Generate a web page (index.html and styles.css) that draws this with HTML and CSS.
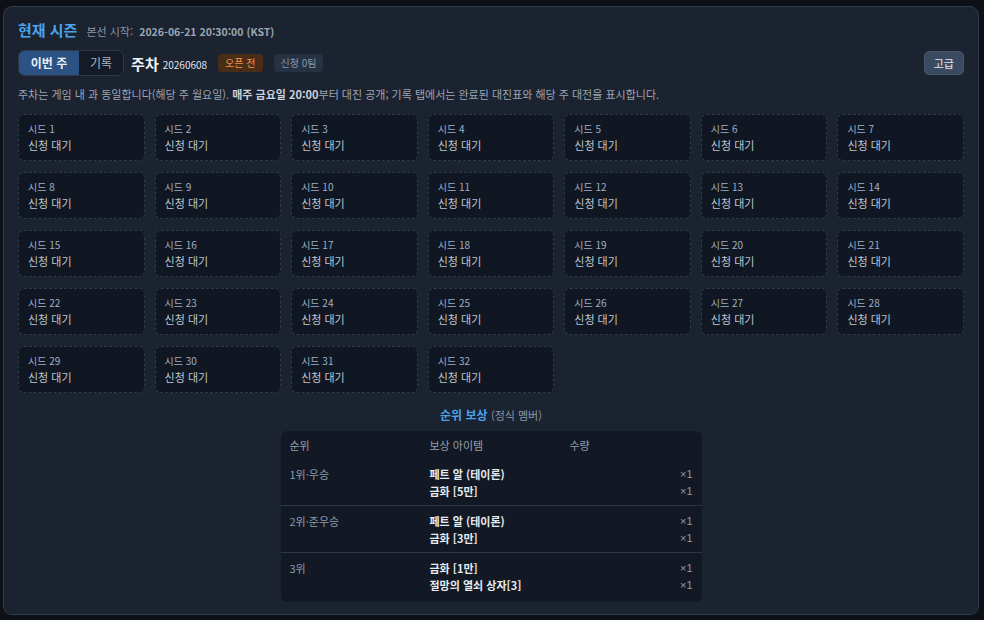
FILE: index.html
```html
<!DOCTYPE html>
<html lang="ko">
  <head>
    <meta charset="UTF-8" />
    <title>현재 시즌</title>
    <link rel="stylesheet" href="styles.css">
  </head>
  <body>
    <div class="season-panel">
      <div class="season-head">
        <h2>현재 시즌</h2>
        <span class="start-time">본선 시작:&nbsp; <b>2026-06-21 20:30:00 (KST)</b></span>
      </div>

      <div class="toolbar">
        <div class="tabs">
          <button class="tab active">이번 주</button>
          <button class="tab">기록</button>
        </div>
        <span class="week-label">주차</span>
        <span class="week-num">20260608</span>
        <span class="badge badge-open">오픈 전</span>
        <span class="badge badge-count">신청 0팀</span>
        <button class="adv-btn">고급</button>
      </div>

      <p class="note">주차는 게임 내 과 동일합니다(해당 주 월요일). <b>매주 금요일 20:00</b>부터 대진 공개; 기록 탭에서는 완료된 대진표와 해당 주 대전을 표시합니다.</p>

      <div class="seed-grid" id="seed-grid"></div>

      <div class="reward">
        <h3>순위 보상 <span>(정식 멤버)</span></h3>
        <div class="reward-table">
          <div class="rt-head">
            <div>순위</div>
            <div>보상 아이템</div>
            <div>수량</div>
          </div>
          <div class="rt-row">
            <div class="rank">1위·우승</div>
            <div class="items">
              <div>페트 알 (테이론)</div>
              <div>금화 [5만]</div>
            </div>
            <div class="qty">
              <div>×1</div>
              <div>×1</div>
            </div>
          </div>
          <div class="rt-row">
            <div class="rank">2위·준우승</div>
            <div class="items">
              <div>페트 알 (테이론)</div>
              <div>금화 [3만]</div>
            </div>
            <div class="qty">
              <div>×1</div>
              <div>×1</div>
            </div>
          </div>
          <div class="rt-row">
            <div class="rank">3위</div>
            <div class="items">
              <div>금화 [1만]</div>
              <div>절망의 열쇠 상자[3]</div>
            </div>
            <div class="qty">
              <div>×1</div>
              <div>×1</div>
            </div>
          </div>
        </div>
      </div>
    </div>

    <script>
      const grid = document.getElementById("seed-grid");
      for (let i = 1; i <= 32; i++) {
        const card = document.createElement("div");
        card.className = "seed-card";
        card.innerHTML = `<div class="seed-no">시드 ${i}</div><div class="seed-state">신청 대기</div>`;
        grid.appendChild(card);
      }
    </script>
  </body>
</html>
```

FILE: styles.css
```css
body {
  margin: 0;
  padding: 6px 5px 5px 3px;
  background: #0d1117;
  font-family: "Noto Sans CJK KR", "Noto Sans", sans-serif;
  color: #d7dde6;
}

.season-panel {
  background: #1b2230;
  border: 1px solid #2f3a4b;
  border-radius: 9px;
  padding: 12px 14px 12px 14px;
}

.season-head {
  display: flex;
  align-items: baseline;
  gap: 9px;
}

.season-head h2 {
  margin: 0;
  font-size: 15px;
  font-weight: 700;
  color: #4ba3ea;
  line-height: 22px;
}

.start-time {
  font-size: 11px;
  color: #8b96a6;
}

.start-time b {
  font-size: 10.5px;
  font-weight: 600;
  color: #9aa5b4;
}

.toolbar {
  display: flex;
  align-items: center;
  margin-top: 8px;
  height: 28px;
}

.tabs {
  display: flex;
  border: 1px solid #2c3748;
  border-radius: 6px;
  overflow: hidden;
  background: #141b26;
}

.tab {
  font-family: inherit;
  font-size: 12px;
  border: none;
  background: transparent;
  color: #aab4c2;
  padding: 4px 11px;
  line-height: 16px;
}

.tab.active {
  background: #2b5282;
  color: #e8eef6;
  font-weight: 600;
  padding: 4px 11px 4px 11px;
  width: 60px;
}

.week-label {
  font-size: 15px;
  font-weight: 600;
  color: #eef2f7;
  margin-left: 7px;
}

.week-num {
  font-size: 10px;
  color: #dfe4eb;
  margin-left: 4px;
  margin-top: 3px;
}

.badge {
  font-size: 10px;
  border-radius: 4px;
  padding: 1px 7px;
  line-height: 16px;
}

.badge-open {
  background: #4a2d17;
  color: #f0924e;
  margin-left: 11px;
}

.badge-count {
  background: #263142;
  color: #8796ab;
  margin-left: 11px;
}

.adv-btn {
  margin-left: auto;
  font-family: inherit;
  font-size: 11px;
  background: #3a4a60;
  color: #e6ebf2;
  border: 1px solid #46566d;
  border-radius: 5px;
  padding: 3px 9px;
  line-height: 16px;
}

.note {
  margin: 10px 0 13px;
  font-size: 11px;
  color: #9ba6b5;
  line-height: 14px;
}

.note b {
  color: #c9d1dc;
  font-weight: 700;
}

.seed-grid {
  display: grid;
  grid-template-columns: repeat(7, 1fr);
  gap: 11px 10px;
}

.seed-card {
  background: #111722;
  border: 1px dashed #2e3949;
  border-radius: 6px;
  height: 45px;
  padding: 0 9px;
  display: flex;
  flex-direction: column;
  justify-content: center;
}

.seed-no {
  font-size: 10px;
  color: #9fb0c6;
  line-height: 15px;
}

.seed-state {
  font-size: 11px;
  color: #bec6d1;
  line-height: 19px;
}

.reward {
  display: flex;
  flex-direction: column;
  align-items: center;
  margin-top: 13px;
}

.reward h3 {
  margin: 0 0 7px;
  font-size: 12px;
  font-weight: 700;
  color: #4ba3ea;
  line-height: 17px;
}

.reward h3 span {
  font-size: 11px;
  font-weight: 400;
  color: #8b96a6;
}

.reward-table {
  width: 421px;
  background: #121925;
  border-radius: 6px;
  padding-bottom: 3px;
}

.rt-head,
.rt-row {
  display: grid;
  grid-template-columns: 140px 140px 1fr;
  padding: 0 9px;
}

.rt-head {
  font-size: 11px;
  color: #95a0ae;
  padding-top: 6px;
  height: 22px;
  line-height: 17px;
}

.rt-row {
  padding-top: 7px;
  padding-bottom: 5px;
  font-size: 11px;
  line-height: 17px;
}

.rt-row + .rt-row {
  border-top: 1px solid #2b3646;
}

.rank {
  color: #8e99a8;
}

.items {
  color: #e6ebf1;
  font-weight: 700;
}

.qty {
  text-align: right;
  color: #8e99a8;
  font-family: "Liberation Sans", sans-serif;
}
```
